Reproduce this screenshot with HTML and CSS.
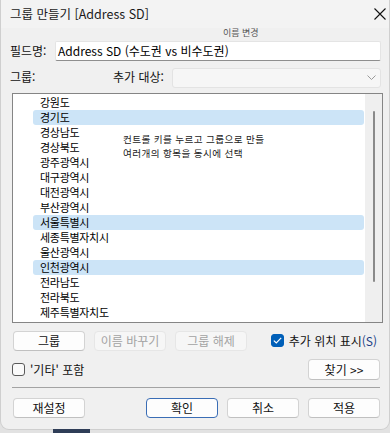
FILE: index.html
```html
<!DOCTYPE html>
<html lang="ko">
<head>
<meta charset="utf-8">
<title>그룹 만들기</title>
<link rel="stylesheet" href="styles.css">
</head>
<body>
<div class="window">
  <div class="titlebar">
    <span class="title">그룹 만들기 [Address SD]</span>
    <svg class="close" width="12" height="12" viewBox="0 0 12 12"><path d="M0.5 0.5 L11.5 11.5 M11.5 0.5 L0.5 11.5" stroke="#111" stroke-width="1.1" fill="none"/></svg>
  </div>
  <div class="caption"><span>이름 변경</span></div>
  <div class="row field-row">
    <span class="lbl">필드명:</span>
    <div class="input">Address SD (수도권 vs 비수도권)</div>
  </div>
  <div class="row group-row">
    <span class="lbl grp">그룹:</span>
    <span class="lbl target">추가 대상:</span>
    <div class="select"><svg width="9" height="5" viewBox="0 0 9 5"><path d="M0.5 0.5 L4.5 4.5 L8.5 0.5" stroke="#9a9a9a" stroke-width="1" fill="none"/></svg></div>
  </div>
  <div class="listbox">
    <div class="items">
      <div class="hint"><div class="hl">컨트롤 키를 누르고 그룹으로 만들</div><div class="hl">여러개의 항목을 동시에 선택</div></div>
      <div class="item">강원도</div>
      <div class="item sel">경기도</div>
      <div class="item">경상남도</div>
      <div class="item">경상북도</div>
      <div class="item">광주광역시</div>
      <div class="item">대구광역시</div>
      <div class="item">대전광역시</div>
      <div class="item">부산광역시</div>
      <div class="item sel">서울특별시</div>
      <div class="item">세종특별자치시</div>
      <div class="item">울산광역시</div>
      <div class="item sel">인천광역시</div>
      <div class="item">전라남도</div>
      <div class="item">전라북도</div>
      <div class="item">제주특별자치도</div>
    </div>
    <div class="scrollbar"><div class="thumb"></div></div>
  </div>
  <div class="row btn-row">
    <button class="btn">그룹</button>
    <button class="btn disabled">이름 바꾸기</button>
    <button class="btn disabled">그룹 해제</button>
    <span class="check on"><svg width="9" height="7" viewBox="0 0 9 7"><path d="M0.8 3.6 L3.3 6 L8.2 0.9" stroke="#fff" stroke-width="1.2" fill="none"/></svg></span>
    <span class="chk-label">추가 위치 표시<span class="acc">(S)</span></span>
  </div>
  <div class="row opt-row">
    <span class="check"></span>
    <span class="chk-label">'기타' 포함</span>
    <button class="btn find">찾기 &gt;&gt;</button>
  </div>
  <div class="sep"></div>
  <div class="row footer">
    <button class="btn">재설정</button>
    <button class="btn primary">확인</button>
    <button class="btn">취소</button>
    <button class="btn">적용</button>
  </div>
</div>
<div class="taskbar"><div class="tb-item"></div></div>
</body>
</html>
```

FILE: styles.css
```css
* { box-sizing: border-box; }
html, body { margin: 0; padding: 0; }
body {
  background: #e2e2e2;
  font-family: "Noto Sans CJK KR", "Noto Sans", sans-serif;
  font-size: 12px;
  color: #000;
  width: 390px;
  height: 433px;
  overflow: hidden;
}
.window {
  margin-left: 1px;
  width: 388px;
  height: 429px;
  background: #f0f0f0;
  border-radius: 0 0 8px 8px;
  box-shadow: 0 0 0 1px #cfcfcf;
  display: flex;
  flex-direction: column;
}
.titlebar {
  height: 28px;
  display: flex;
  align-items: center;
  justify-content: space-between;
  padding: 0 3px 0 9px;
  background: #f3f3f3;
}
.title { font-size: 12.5px; line-height: 16px; color: #1a1a1a; }
.close { display: block; }
.caption {
  height: 13px;
  padding-left: 222px;
}
.caption span {
  display: block;
  font-size: 9px;
  line-height: 10px;
  color: #555;
}
.row { display: flex; align-items: center; }
.lbl { line-height: 16px; color: #111; }
.field-row { height: 20px; padding: 0 8px 0 9px; }
.input {
  margin-left: auto;
  width: 326px;
  height: 20px;
  background: #fff;
  border: 1px solid #e4e4e4;
  border-bottom-color: #8e8e8e;
  border-radius: 2px;
  padding-left: 2px;
  line-height: 17px;
  font-size: 12px;
  white-space: nowrap;
}
.group-row { height: 20px; margin-top: 6px; padding: 0 8px 0 9px; }
.grp { width: 103px; }
.target { width: 59px; }
.select {
  flex: 1;
  height: 20px;
  margin-top: 1px;
  background: #f6f6f6;
  border: 1px solid #e3e3e3;
  border-radius: 3px;
  display: flex;
  align-items: center;
  justify-content: flex-end;
  padding-right: 4px;
}
.select svg { display: block; }
.listbox {
  margin: 6px 0 0 11px;
  width: 371px;
  height: 230px;
  background: #fff;
  border: 1px solid #858585;
  display: flex;
}
.items {
  flex: 1;
  padding: 1px 1px 0 0;
  display: grid;
  grid-template-columns: 110px 1fr;
  grid-auto-rows: 15px;
  align-content: start;
}
.item {
  grid-column: 1;
  height: 15px;
  margin-left: 20px;
  padding-left: 7px;
  font-size: 11px;
  letter-spacing: -0.3px;
  line-height: 15px;
  border-radius: 3px;
  white-space: nowrap;
}
.item.sel { background: #cce4f7; grid-column: 1 / 3; }
.hint {
  grid-column: 2;
  grid-row: 3 / 5;
  padding-top: 7px;
  font-size: 9.6px;
  color: #222;
  letter-spacing: 0.4px;
  white-space: nowrap;
}
.hl { height: 14px; line-height: 14px; }
.scrollbar {
  width: 17px;
  background: #efefef;
  display: flex;
  justify-content: center;
  padding-top: 17px;
}
.thumb { width: 2px; height: 171px; background: #8a8a8a; border-radius: 1px; }
.btn {
  font-family: inherit;
  font-size: 12px;
  color: #111;
  width: 72px;
  height: 20px;
  padding: 0;
  background: #fdfdfd;
  border: 1px solid #d3d3d3;
  border-bottom-color: #c0c0c0;
  border-radius: 4px;
  line-height: 16px;
  text-align: center;
}
.btn.disabled { background: #f6f6f6; border-color: #e6e6e6; color: #a3a3a3; }
.btn.primary { border: 1px solid #3a6db5; }
.btn-row { height: 19px; margin-top: 8px; padding: 0 12px 0 12px; gap: 9px; }
.btn-row .check { margin-left: auto; }
.check {
  width: 13px;
  height: 13px;
  border: 1px solid #5a5a5a;
  border-radius: 3px;
  background: #fafafa;
  display: flex;
  align-items: center;
  justify-content: center;
  flex: none;
}
.check.on { background: #005fb8; border-color: #005fb8; }
.check svg { display: block; }
.btn-row .chk-label { margin-left: -4px; }
.chk-label { line-height: 16px; white-space: nowrap; color: #111; }
.acc { color: #1c3f86; }
.opt-row { height: 21px; margin-top: 9px; padding: 0 9px 0 11px; gap: 5px; }
.opt-row .find { margin-left: auto; height: 21px; }
.sep { height: 1px; margin: 7px 9px 0 11px; background: #a3a3a3; }
.footer { height: 19px; margin-top: 10px; padding: 0 9px 0 12px; gap: 9px; }
.footer .primary { margin-left: auto; }
.taskbar { height: 4px; padding-left: 53px; }
.tb-item { width: 37px; height: 4px; background: #2f3d57; }
```
